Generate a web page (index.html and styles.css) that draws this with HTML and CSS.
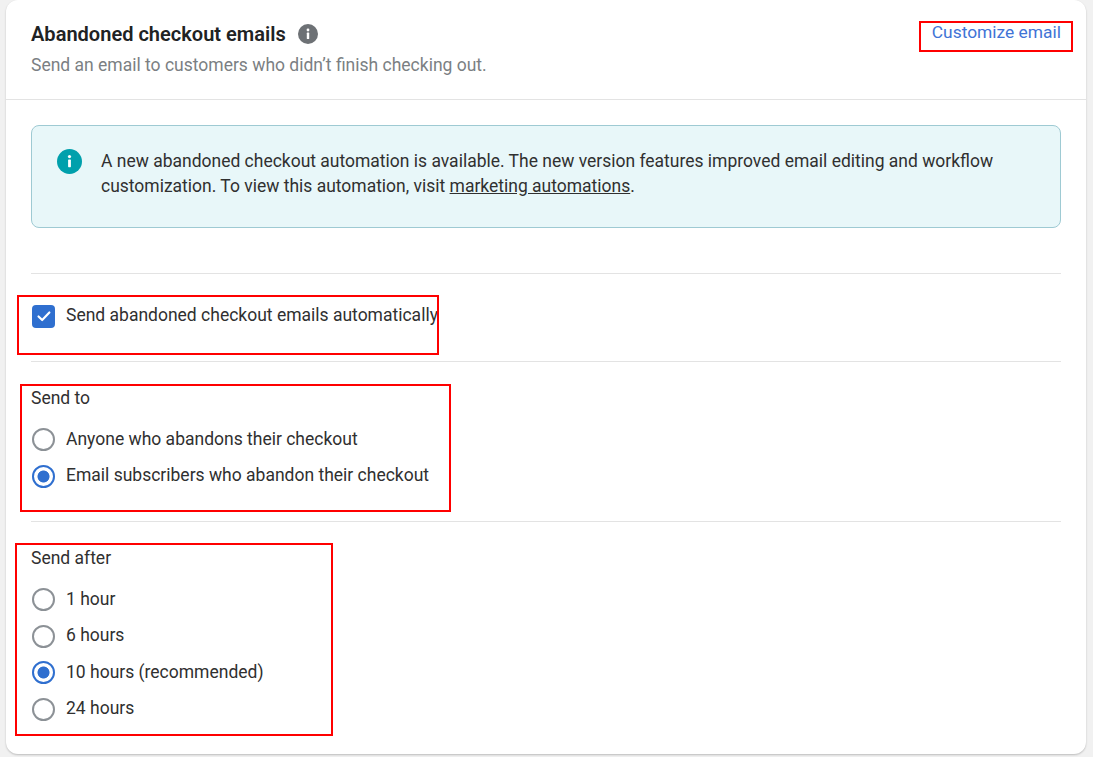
FILE: index.html
```html
<!DOCTYPE html>
<html lang="en">
  <head>
    <meta charset="UTF-8" />
    <meta name="viewport" content="width=device-width, initial-scale=1.0" />
    <title>Abandoned checkout emails</title>
    <link rel="stylesheet" href="styles.css">
  </head>
  <body>
    <div class="card">
      <div class="card-header">
        <div>
          <div class="title-row">
            <h2 class="title">Abandoned checkout emails</h2>
            <svg class="title-icon" width="20" height="20" viewBox="0 0 20 20">
              <circle cx="10" cy="10" r="10" fill="#6d7175" />
              <circle cx="10" cy="6" r="1.4" fill="#fff" />
              <rect x="8.8" y="8.6" width="2.4" height="6.4" rx="0.6" fill="#fff" />
            </svg>
          </div>
          <p class="subtitle">Send an email to customers who didn’t finish checking out.</p>
        </div>
        <a class="customize" href="#">Customize email</a>
      </div>

      <div class="card-body">
        <div class="banner">
          <svg class="banner-icon" width="25" height="25" viewBox="0 0 25 25">
            <circle cx="12.5" cy="12.5" r="12.5" fill="#00a0ac" />
            <circle cx="12.5" cy="7.6" r="1.6" fill="#fff" />
            <rect x="11.1" y="10.6" width="2.8" height="7.6" rx="0.6" fill="#fff" />
          </svg>
          <p class="banner-text">
            A new abandoned checkout automation is available. The new version features improved email editing and workflow
            customization. To view this automation, visit <a href="#">marketing automations</a>.
          </p>
        </div>

        <div class="section section-check">
          <div class="option">
            <span class="checkbox">
              <svg width="16" height="16" viewBox="0 0 14 14">
                <path d="M2.2 7.4l3.2 3.1 6.3-6.6" fill="none" stroke="#fff" stroke-width="1.9" stroke-linecap="round" stroke-linejoin="round" />
              </svg>
            </span>
            <span class="option-text">Send abandoned checkout emails automatically</span>
          </div>
        </div>

        <div class="section section-to">
          <div class="label">Send to</div>
          <div class="option"><span class="radio"></span><span class="option-text">Anyone who abandons their checkout</span></div>
          <div class="option"><span class="radio checked"></span><span class="option-text">Email subscribers who abandon their checkout</span></div>
        </div>

        <div class="section section-after">
          <div class="label">Send after</div>
          <div class="option"><span class="radio"></span><span class="option-text">1 hour</span></div>
          <div class="option"><span class="radio"></span><span class="option-text">6 hours</span></div>
          <div class="option"><span class="radio checked"></span><span class="option-text">10 hours (recommended)</span></div>
          <div class="option"><span class="radio"></span><span class="option-text">24 hours</span></div>
        </div>
      </div>
    </div>

    <!-- red annotation boxes drawn over the page -->
    <div class="mark mark-link"></div>
    <div class="mark mark-check"></div>
    <div class="mark mark-to"></div>
    <div class="mark mark-after"></div>
  </body>
</html>
```

FILE: styles.css
```css
body {
  margin: 0;
  height: 757px;
  overflow: hidden;
  position: relative;
  background-color: #f1f1f1;
  font-family: Roboto, "Liberation Sans", sans-serif;
  font-size: 17.5px;
  color: #303030;
}
.card {
  margin: 0 7px 0 6px;
  height: 754px;
  box-sizing: border-box;
  background-color: #fff;
  border-radius: 12px;
  box-shadow: 0 1px 2px rgba(0, 0, 0, 0.22);
}
.card-header {
  display: flex;
  justify-content: space-between;
  align-items: flex-start;
  height: 100px;
  box-sizing: border-box;
  padding: 21px 25px 0;
  border-bottom: 1px solid #e3e3e3;
}
.title-row {
  display: flex;
  align-items: center;
  gap: 12px;
  height: 26px;
}
.title {
  margin: 0;
  font-size: 20.05px;
  font-weight: 600;
  line-height: 26px;
  color: #202223;
}
.subtitle {
  margin: 7px 0 0;
  line-height: 22px;
  color: #7b7f83;
}
.customize {
  margin-top: -1px;
  font-size: 17.4px;
  line-height: 24px;
  color: #3f74d6;
  text-decoration: none;
}
.card-body {
  padding: 25px 25px 0;
}
.banner {
  display: flex;
  gap: 19.5px;
  height: 103px;
  box-sizing: border-box;
  padding: 23px 24px 0 24.5px;
  background-color: #e8f7f9;
  border: 1px solid #9ecad3;
  border-radius: 8px;
}
.banner-icon {
  flex: none;
}
.banner-text {
  margin: 0;
  font-size: 17.49px;
  line-height: 25px;
  color: #303030;
}
.banner-text a {
  color: #303030;
}
.section {
  border-top: 1px solid #e3e3e3;
  box-sizing: border-box;
}
.section-check {
  margin-top: 45px;
  height: 88px;
  padding-top: 30px;
}
.section-to {
  height: 160px;
  padding-top: 24px;
}
.section-after {
  padding-top: 24px;
}
.label {
  line-height: 24px;
  margin-bottom: 17.5px;
}
.option {
  display: flex;
  align-items: center;
  gap: 11px;
  height: 24px;
  margin-bottom: 12.67px;
  padding-left: 1px;
  line-height: 22px;
}
.option-text {
  position: relative;
  top: -1px;
}
.checkbox {
  flex: none;
  width: 23px;
  height: 23px;
  display: flex;
  align-items: center;
  justify-content: center;
  background-color: #2f6fcf;
  border-radius: 4px;
}
.radio {
  flex: none;
  width: 23px;
  height: 23px;
  box-sizing: border-box;
  border: 2px solid #8c9196;
  border-radius: 50%;
  background-color: #fff;
}
.radio.checked {
  border-color: #2f6fcf;
  background: radial-gradient(circle, #2f6fcf 0, #2f6fcf 5.6px, #fff 6.4px);
}
.mark {
  position: absolute;
  box-sizing: border-box;
  border: 2.5px solid #f00;
}
.mark-link {
  left: 919px;
  top: 21px;
  width: 154px;
  height: 31px;
}
.mark-check {
  left: 17px;
  top: 295px;
  width: 422px;
  height: 60px;
}
.mark-to {
  left: 20px;
  top: 384px;
  width: 431px;
  height: 128px;
}
.mark-after {
  left: 15px;
  top: 543px;
  width: 318px;
  height: 193px;
}
```
